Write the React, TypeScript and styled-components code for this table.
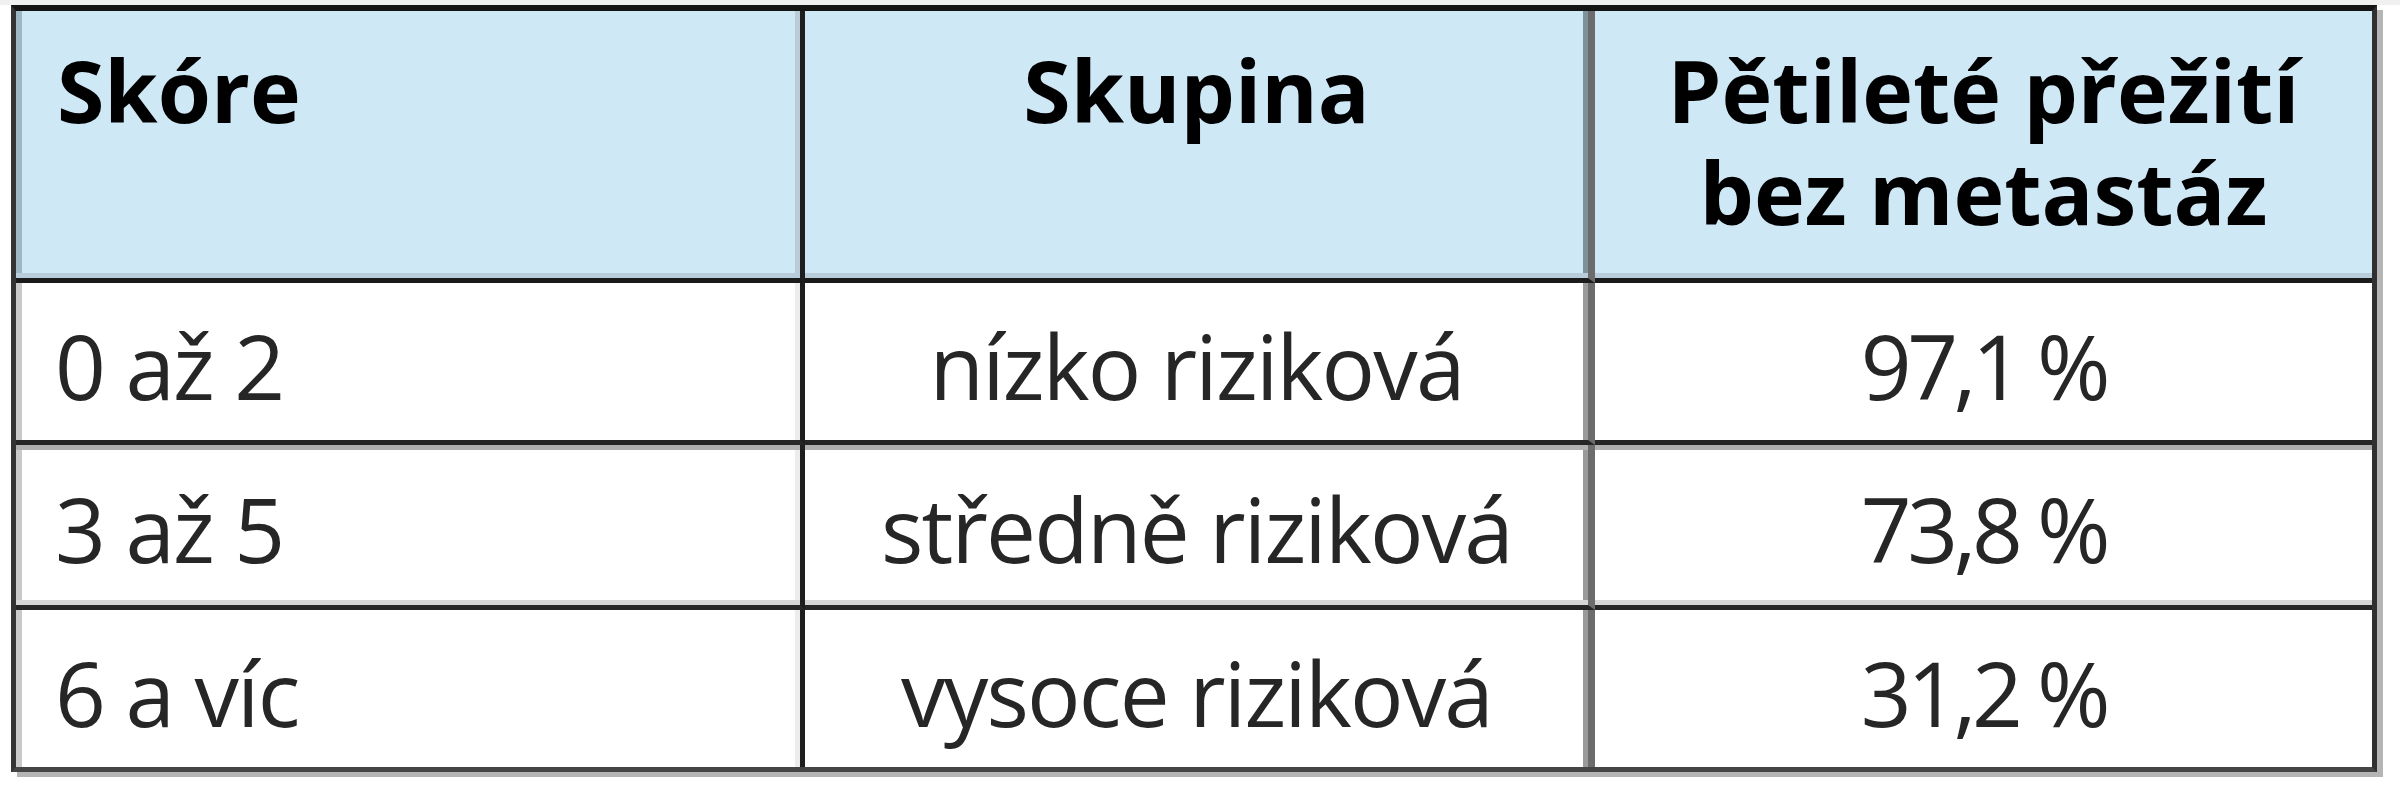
import React from "react";
import styled, { createGlobalStyle } from "styled-components";

const GlobalStyle = createGlobalStyle`
  html, body {
    margin: 0;
    padding: 0;
    background: #ffffff;
  }
  body {
    font-family: "Open Sans", "Noto Sans", "Liberation Sans", sans-serif;
  }
`;

const Page = styled.div`
  width: 2400px;
  height: 800px;
  box-sizing: border-box;
  border-top: 5px solid #f0f0f0;
  padding-left: 11px;
  background: #ffffff;
`;

const Table = styled.div`
  display: grid;
  grid-template-columns: 789px 790px 777px;
  grid-template-rows: 272px 162px 165px 157px;
  width: 2366px;
  box-sizing: border-box;
  border-style: solid;
  border-color: #141414 #303030 #454545 #333333;
  border-width: 6px 5px 5px 5px;
  box-shadow: 6px 5px 0 #b5b5b5;
`;

type Align = "left" | "center";

const Cell = styled.div<{
  $align: Align;
  $header?: boolean;
  $numeric?: boolean;
  $col: number;
  $last?: boolean;
  $row: number;
}>`
  box-sizing: border-box;
  display: flex;
  flex-direction: column;
  justify-content: ${(p) => (p.$header ? "flex-start" : "center")};
  align-items: ${(p) => (p.$align === "left" ? "flex-start" : "center")};
  text-align: ${(p) => p.$align};
  padding-top: ${(p) => (p.$header ? "28px" : "8px")};
  padding-right: 10px;
  padding-left: ${(p) =>
    p.$align === "left" ? (p.$header ? "41px" : "39px") : "10px"};
  background: ${(p) => (p.$header ? "#cfe8f6" : "#ffffff")};
  color: ${(p) => (p.$header ? "#000000" : "#262626")};
  font-size: ${(p) => (p.$header ? "86px" : "89px")};
  font-weight: ${(p) => (p.$header ? 700 : 400)};
  line-height: 102px;
  letter-spacing: ${(p) =>
    p.$header ? "0px" : p.$numeric ? "-4.5px" : "-1.8px"};
  white-space: nowrap;
  border-bottom: ${(p) =>
    p.$last ? "none" : p.$header ? "5px solid #1b1b1b" : "5px solid #262626"};
  border-right: ${(p) =>
    p.$col === 0 ? "5px solid #1e1e1e" : p.$col === 1 ? "7px solid #6c6c6c" : "none"};
  box-shadow: ${(p) => {
    const s: string[] = [];
    if (p.$header) s.push("inset 0 -5px 0 #b8cdd9");
    if (p.$row === 2) s.push("inset 0 5px 0 #b0b0b0");
    if (p.$row === 2) s.push("inset 0 -5px 0 #d6d6d6");
    if (p.$col === 0)
      s.push(p.$header ? "inset 6px 0 0 #9fb6c3" : "inset 6px 0 0 #c9c9c9");
    if (p.$col === 0)
      s.push(p.$header ? "inset -5px 0 0 #b9ccd7" : "inset -5px 0 0 #ececec");
    if (p.$col === 1)
      s.push(p.$header ? "inset -5px 0 0 #7f919b" : "inset -5px 0 0 #9a9a9a");
    return s.length ? s.join(", ") : "none";
  }};
`;

const Line = styled.span`
  display: block;
`;

const headers: { text: string[]; align: Align }[] = [
  { text: ["Skóre"], align: "left" },
  { text: ["Skupina"], align: "center" },
  { text: ["Pětileté přežití", "bez metastáz"], align: "center" },
];

const rows: string[][] = [
  ["0 až 2", "nízko riziková", "97,1 %"],
  ["3 až 5", "středně riziková", "73,8 %"],
  ["6 a víc", "vysoce riziková", "31,2 %"],
];

export default function App() {
  return (
    <>
      <GlobalStyle />
      <Page>
        <Table>
          {headers.map((h, c) => (
            <Cell key={"h" + c} $header $align={h.align} $col={c} $row={0}>
              {h.text.map((t) => (
                <Line key={t}>{t}</Line>
              ))}
            </Cell>
          ))}
          {rows.map((r, ri) =>
            r.map((v, c) => (
              <Cell
                key={ri + "-" + c}
                $align={c === 0 ? "left" : "center"}
                $numeric={c === 2}
                $col={c}
                $row={ri + 1}
                $last={ri === rows.length - 1}
              >
                {v}
              </Cell>
            ))
          )}
        </Table>
      </Page>
    </>
  );
}
